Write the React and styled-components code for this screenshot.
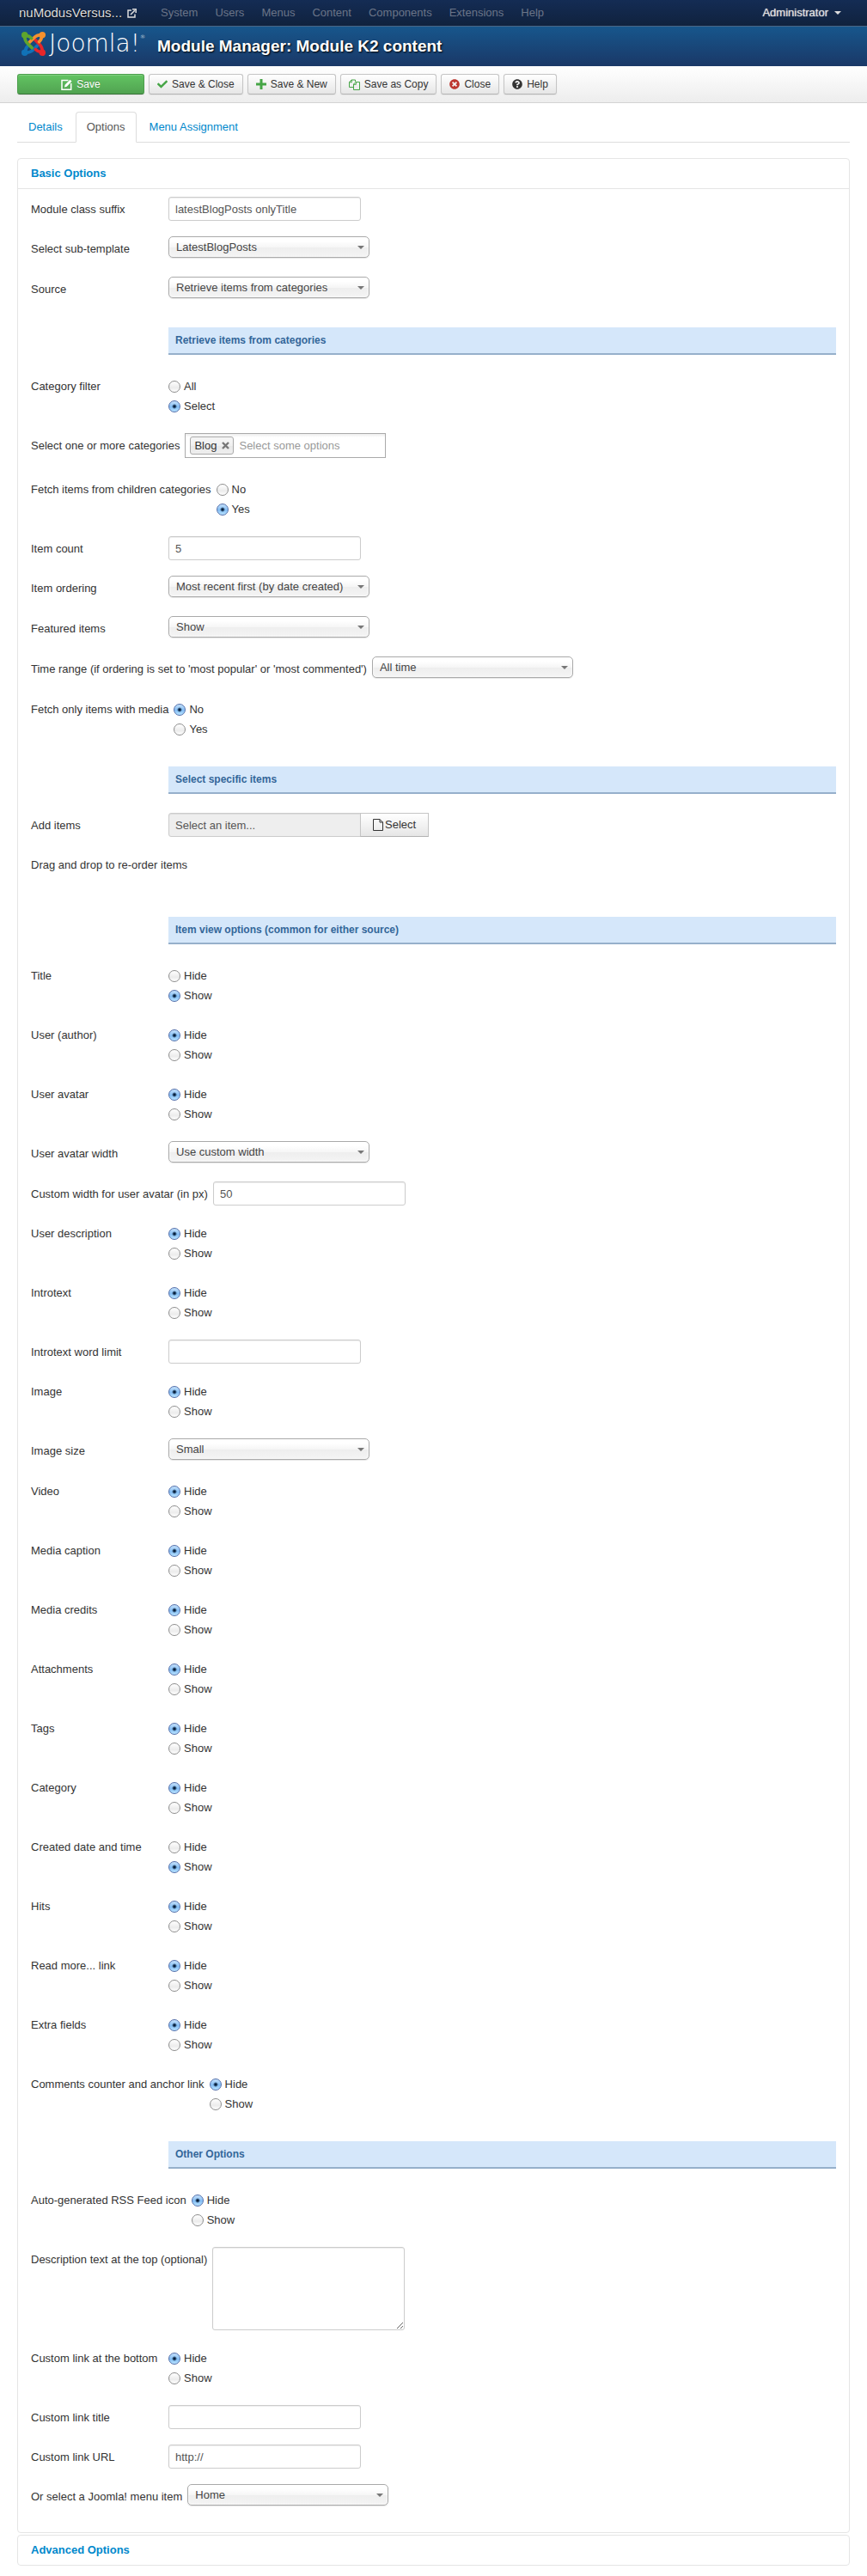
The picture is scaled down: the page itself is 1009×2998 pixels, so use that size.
import { useId } from "react";
import styled, { createGlobalStyle } from "styled-components";
import { FaCheck, FaQuestionCircle, FaTimesCircle } from "react-icons/fa";

const GlobalStyle = createGlobalStyle`
  * {
    box-sizing: border-box;
  }

  body {
    margin: 0;
    background: #fff;
    color: #333;
    font-family: "Liberation Sans", Arial, Helvetica, sans-serif;
    font-size: 13px;
    line-height: 18px;
  }

  input, select, textarea, button {
    margin: 0;
    font-family: inherit;
    font-size: 13px;
    line-height: 18px;
  }

  a {
    color: #08c;
    text-decoration: none;
  }
`;

const NavBar = styled.nav`
  display: flex;
  align-items: center;
  height: 31px;
  padding: 0 30px 0 22px;
  background: linear-gradient(#142c54, #10223e);
  border-bottom: 1px solid #4a6686;
`;

const SiteLink = styled.a`
  display: flex;
  align-items: center;
  gap: 6px;
  margin-right: 18px;
  color: #ddd;
  font-size: 15px;
  text-shadow: 0 1px 1px #000;
`;

const NavMenu = styled.ul`
  display: flex;
  flex: 1;
  margin: 0;
  padding: 0;
  list-style: none;
`;

const NavLink = styled.a`
  padding: 0 10px;
  color: #6b7588;
`;

const UserLink = styled.a`
  display: flex;
  align-items: center;
  gap: 7px;
  color: #ddd;
  text-shadow: 0 0 1px #ddd;
`;

const Caret = styled.span`
  border-top: 4px solid ${props => props.color || "#ddd"};
  border-left: 4px solid transparent;
  border-right: 4px solid transparent;
`;

const Header = styled.header`
  display: flex;
  align-items: center;
  gap: 14px;
  height: 46px;
  padding: 0 25px;
  background: linear-gradient(#17568c, #1a3867);
`;

const Logo = styled.div`
  display: flex;
  align-items: center;
  gap: 4px;
  width: 144px;
  padding-bottom: 6px;
  color: #fff;
`;

const LogoText = styled.span`
  display: flex;
  font-family: "DejaVu Sans", sans-serif;
  font-size: 28px;
  font-weight: 200;
  line-height: 30px;
`;

const Trademark = styled.sup`
  font-size: 6px;
  line-height: 14px;
`;

const PageTitle = styled.h1`
  margin: 0;
  color: #fff;
  font-size: 19px;
  line-height: 36px;
  text-shadow: 1px 1px 2px #000;
`;

const Toolbar = styled.div`
  display: flex;
  flex-wrap: wrap;
  gap: 5px;
  padding: 9px 20px;
  background: linear-gradient(#fff, #ededed);
  border-bottom: 1px solid #d3d3d3;
`;

const ToolButton = styled.button`
  display: flex;
  align-items: center;
  justify-content: center;
  gap: 5px;
  height: 24px;
  min-width: ${props => props.$primary ? "148px" : "0"};
  padding: 0 9px;
  color: ${props => props.$primary ? "#fff" : "#333"};
  background: ${props => props.$primary ? "linear-gradient(#62c462, #51a351)" : "linear-gradient(#fff, #e6e6e6)"};
  border: 1px solid ${props => props.$primary ? "#4b9e4b" : "#c5c5c5"};
  border-bottom-color: ${props => props.$primary ? "#387038" : "#b3b3b3"};
  border-radius: 3px;
  box-shadow: inset 0 1px 0 rgba(255, 255, 255, .2), 0 1px 2px rgba(0, 0, 0, .05);
  font-size: 12px;
  text-shadow: ${props => props.$primary ? "0 -1px 0 rgba(0, 0, 0, .25)" : "none"};
`;

const Content = styled.main`
  padding: 10px 20px;
`;

const Tabs = styled.div`
  display: flex;
  gap: 2px;
  margin-bottom: 18px;
  border-bottom: 1px solid #ddd;
`;

const Tab = styled.a`
  margin-bottom: -1px;
  padding: 8px 12px;
  color: ${props => props.$active ? "#555" : "#08c"};
  background: ${props => props.$active ? "#fff" : "transparent"};
  border: 1px solid ${props => props.$active ? "#ddd" : "transparent"};
  border-bottom-color: ${props => props.$active ? "#fff" : "transparent"};
  border-radius: 4px 4px 0 0;
`;

const Panel = styled.section`
  margin-bottom: 2px;
  border: 1px solid #e5e5e5;
  border-radius: 4px;
`;

const PanelHeading = styled.h2`
  margin: 0;
  padding: 8px 15px;
  font-size: 13px;
  line-height: 18px;
`;

const PanelBody = styled.div`
  padding: 9px 15px;
  border-top: 1px solid #e5e5e5;
`;

const Row = styled.div`
  display: flex;
  align-items: flex-start;
  min-height: ${props => props.$height}px;
`;

const RowLabel = styled.label`
  flex: none;
  min-width: 160px;
  padding: 6px 6px 0 0;
`;

const Band = styled.h3`
  margin: 12px 0 22px 160px;
  padding: 6px 8px;
  color: #369;
  background: #d5e7fa;
  border-bottom: 2px solid #96b0cb;
  font-size: 12px;
  line-height: 18px;
`;

const TextInput = styled.input`
  width: 224px;
  height: 28px;
  padding: 4px 7px;
  color: #555;
  background: ${props => props.readOnly ? "#eee" : "#fff"};
  border: 1px solid #ccc;
  border-radius: ${props => props.readOnly ? "3px 0 0 3px" : "3px"};
  box-shadow: inset 0 1px 1px rgba(0, 0, 0, .075);
`;

const TextArea = styled.textarea`
  width: 224px;
  height: 97px;
  padding: 4px 7px;
  color: #555;
  border: 1px solid #ccc;
  border-radius: 3px;
  box-shadow: inset 0 1px 1px rgba(0, 0, 0, .075);
`;

/* the caret shares the select's grid cell */
const SelectBox = styled.span`
  display: grid;
  align-items: center;
  width: 234px;

  > * {
    grid-area: 1 / 1;
  }

  > span {
    justify-self: end;
    margin-right: 6px;
    pointer-events: none;
  }
`;

const StyledSelect = styled.select`
  appearance: none;
  width: 100%;
  height: 25px;
  padding: 0 22px 0 8px;
  color: #444;
  background: linear-gradient(#fff 20%, #f6f6f6 50%, #eee 52%, #f4f4f4 100%);
  border: 1px solid #aaa;
  border-radius: 5px;
  box-shadow: inset 0 0 3px #fff, 0 1px 1px rgba(0, 0, 0, .1);
`;

const RadioGroup = styled.div`
  display: flex;
  flex-direction: column;
  gap: 5px;
  padding-top: 6px;
`;

const RadioLabel = styled.label`
  display: flex;
  align-items: center;
  gap: 4px;
`;

const RadioInput = styled.input`
  appearance: none;
  width: 14px;
  height: 14px;
  background: linear-gradient(#fff, #ececec 60%, #fff);
  border: 1px solid #8e8e8e;
  border-radius: 50%;

  &:checked {
    background:
      radial-gradient(circle, #07203c 1px, transparent 3px),
      linear-gradient(#c4e1fb, #83bdf4 55%, #b9e4ff);
    border-color: #5570ab;
  }
`;

const ChosenBox = styled.div`
  display: flex;
  align-items: center;
  gap: 6px;
  width: 234px;
  height: 29px;
  padding: 0 5px;
  background: linear-gradient(#eee 1%, #fff 15%);
  border: 1px solid #aaa;
`;

const Chip = styled.span`
  display: flex;
  align-items: center;
  gap: 6px;
  height: 21px;
  padding: 0 4px;
  background: linear-gradient(#f4f4f4 20%, #f0f0f0 50%, #e8e8e8 52%, #eee);
  border: 1px solid #aaa;
  border-radius: 3px;
`;

const ChipClose = styled.button`
  display: flex;
  padding: 0;
  color: #777;
  background: none;
  border: 0;
`;

const ChosenInput = styled.input`
  flex: 1;
  min-width: 0;
  padding: 0;
  background: transparent;
  border: 0;

  &::placeholder {
    color: #999;
  }
`;

const PickButton = styled.button`
  display: flex;
  align-items: center;
  gap: 2px;
  height: 28px;
  margin-left: -1px;
  padding: 4px 14px;
  color: #333;
  background: linear-gradient(#fff, #e6e6e6);
  border: 1px solid #c5c5c5;
  border-bottom-color: #b3b3b3;
`;

const JoomlaMark = () => (
    <svg width="30" height="30" viewBox="0 0 30 30" fill="none" strokeWidth="4" strokeLinecap="round" strokeLinejoin="round">
        <g stroke="#1172b8">
            <circle cx="4" cy="26" r="2" fill="#1172b8" />
            <path d="M4 26 C9 26.500 12 25 15 22 L20 17 M5 25 C4.500 22 5.500 20 8 17.500" />
        </g>
        <g stroke="#e8262a">
            <circle cx="26" cy="26" r="2" fill="#e8262a" />
            <path d="M26 26 C26.500 21 25 18 22 15 L17 10 M25 25 C22 25.500 20 24.500 17.500 22" />
        </g>
        <g stroke="#f7912d">
            <circle cx="26" cy="4" r="2" fill="#f7912d" />
            <path d="M26 4 C21 3.500 18 5 15 8 L10 13 M25 5 C25.500 8 24.500 10 22 12.500" />
        </g>
        <g stroke="#5fa52d">
            <circle cx="4" cy="4" r="2" fill="#5fa52d" />
            <path d="M4 4 C3.500 9 5 12 8 15 L13 20 M5 5 C8 4.500 10 5.500 12.500 8" />
        </g>
    </svg>
);

const ExternalIcon = () => (
    <svg width="11" height="11" viewBox="0 0 11 11" fill="none" stroke="#ddd" strokeWidth="1.500">
        <path d="M5 2H1v8h8V6.500M4 7l5-5" />
        <path d="M6 .8h4.200V5" />
    </svg>
);

const EditIcon = () => (
    <svg width="13" height="13" viewBox="0 0 13 13" fill="none" stroke="#fff" strokeWidth="1.500">
        <path d="M8.500 1.500H1v10.700h10.700V5" />
        <path d="M4 9.500l.6-2.800L10.500.8l2 2L6.700 8.800z" fill="#fff" stroke="none" />
    </svg>
);

const PlusIcon = () => (
    <svg width="12" height="12" viewBox="0 0 12 12" fill="#46a546">
        <path d="M4.500 0h3v4.500H12v3H7.500V12h-3V7.500H0v-3h4.500z" />
    </svg>
);

const CopyIcon = () => (
    <svg width="13" height="13" viewBox="0 0 13 13" fill="none" stroke="#46a546">
        <path d="M5 9.500H.5v-6L3 1h4.500v2M.5 3.800h2.800V1" />
        <path d="M5.500 6L8 3.500h4.500v9h-7zM5.500 6.300h2.800V3.500" />
    </svg>
);

const FileIcon = () => (
    <svg width="12" height="14" viewBox="0 0 12 14" fill="none" stroke="#333">
        <path d="M.5.5h7.500L11.500 4v9.500H.5zM8 .5V4h3.500" />
    </svg>
);

const CrossIcon = () => (
    <svg width="9" height="9" viewBox="0 0 9 9" stroke="currentColor" strokeWidth="2.400">
        <path d="M1 1l7 7M8 1L1 8" />
    </svg>
);

const TextField = ({ label, value }) => {
    const id = useId();
    return (
        <Row $height={46}>
            <RowLabel htmlFor={id}>{label}</RowLabel>
            <TextInput id={id} type="text" defaultValue={value} />
        </Row>
    )
}

const SelectField = ({ label, value }) => {
    const id = useId();
    return (
        <Row $height={47}>
            <RowLabel htmlFor={id}>{label}</RowLabel>
            <SelectBox>
                <StyledSelect id={id} defaultValue={value}>
                    <option>{value}</option>
                </StyledSelect>
                <Caret color="#777" />
            </SelectBox>
        </Row>
    )
}

const RadioField = ({ label, options = ["Hide", "Show"], value }) => {
    const id = useId();
    return (
        <Row $height={69}>
            <RowLabel as="span" id={id}>{label}</RowLabel>
            <RadioGroup role="radiogroup" aria-labelledby={id}>
                {options.map(option => (
                    <RadioLabel key={option}>
                        <RadioInput type="radio" name={id} defaultChecked={option === value} />
                        {option}
                    </RadioLabel>
                ))}
            </RadioGroup>
        </Row>
    )
}

const viewOptions = [
    ["Video", "Hide"],
    ["Media caption", "Hide"],
    ["Media credits", "Hide"],
    ["Attachments", "Hide"],
    ["Tags", "Hide"],
    ["Category", "Hide"],
    ["Created date and time", "Show"],
    ["Hits", "Hide"],
    ["Read more... link", "Hide"],
    ["Extra fields", "Hide"],
    ["Comments counter and anchor link", "Hide"],
];

const menus = ["System", "Users", "Menus", "Content", "Components", "Extensions", "Help"];

const BasicOptions = () => (
    <PanelBody>
        <TextField label="Module class suffix" value="latestBlogPosts onlyTitle" />
        <SelectField label="Select sub-template" value="LatestBlogPosts" />
        <SelectField label="Source" value="Retrieve items from categories" />

        <Band>Retrieve items from categories</Band>
        <RadioField label="Category filter" options={["All", "Select"]} value="Select" />
        <Row $height={51}>
            <RowLabel htmlFor="categories">Select one or more categories</RowLabel>
            <ChosenBox>
                <Chip>Blog <ChipClose type="button" aria-label="Remove Blog"><CrossIcon /></ChipClose></Chip>
                <ChosenInput id="categories" type="text" placeholder="Select some options" />
            </ChosenBox>
        </Row>
        <RadioField label="Fetch items from children categories" options={["No", "Yes"]} value="Yes" />
        <TextField label="Item count" value="5" />
        <SelectField label="Item ordering" value="Most recent first (by date created)" />
        <SelectField label="Featured items" value="Show" />
        <SelectField label="Time range (if ordering is set to 'most popular' or 'most commented')" value="All time" />
        <RadioField label="Fetch only items with media" options={["No", "Yes"]} value="No" />

        <Band>Select specific items</Band>
        <Row $height={46}>
            <RowLabel htmlFor="addItems">Add items</RowLabel>
            <TextInput id="addItems" type="text" value="Select an item..." readOnly />
            <PickButton type="button"><FileIcon />Select</PickButton>
        </Row>
        <Row $height={63}>
            <RowLabel as="span">Drag and drop to re-order items</RowLabel>
        </Row>

        <Band>Item view options (common for either source)</Band>
        <RadioField label="Title" value="Show" />
        <RadioField label="User (author)" value="Hide" />
        <RadioField label="User avatar" value="Hide" />
        <SelectField label="User avatar width" value="Use custom width" />
        <TextField label="Custom width for user avatar (in px)" value="50" />
        <RadioField label="User description" value="Hide" />
        <RadioField label="Introtext" value="Hide" />
        <TextField label="Introtext word limit" value="" />
        <RadioField label="Image" value="Hide" />
        <SelectField label="Image size" value="Small" />
        {viewOptions.map(([label, value]) => (
            <RadioField key={label} label={label} value={value} />
        ))}

        <Band>Other Options</Band>
        <RadioField label="Auto-generated RSS Feed icon" value="Hide" />
        <Row $height={115}>
            <RowLabel htmlFor="description">Description text at the top (optional)</RowLabel>
            <TextArea id="description" />
        </Row>
        <RadioField label="Custom link at the bottom" value="Hide" />
        <TextField label="Custom link title" value="" />
        <TextField label="Custom link URL" value="http://" />
        <SelectField label="Or select a Joomla! menu item" value="Home" />
    </PanelBody>
);

export default function App() {
    return (
        <>
            <GlobalStyle />
            <NavBar>
                <SiteLink href="#">nuModusVersus... <ExternalIcon /></SiteLink>
                <NavMenu>
                    {menus.map(menu => <li key={menu}><NavLink href="#">{menu}</NavLink></li>)}
                </NavMenu>
                <UserLink href="#">Administrator <Caret /></UserLink>
            </NavBar>
            <Header>
                <Logo>
                    <JoomlaMark />
                    <LogoText>Joomla!<Trademark>®</Trademark></LogoText>
                </Logo>
                <PageTitle>Module Manager: Module K2 content</PageTitle>
            </Header>
            <Toolbar>
                <ToolButton type="button" $primary><EditIcon />Save</ToolButton>
                <ToolButton type="button"><FaCheck size={12} color="#46a546" />Save &amp; Close</ToolButton>
                <ToolButton type="button"><PlusIcon />Save &amp; New</ToolButton>
                <ToolButton type="button"><CopyIcon />Save as Copy</ToolButton>
                <ToolButton type="button"><FaTimesCircle size={12} color="#bd362f" />Close</ToolButton>
                <ToolButton type="button"><FaQuestionCircle size={12} color="#333" />Help</ToolButton>
            </Toolbar>
            <Content>
                <Tabs>
                    <Tab href="#">Details</Tab>
                    <Tab href="#" $active>Options</Tab>
                    <Tab href="#">Menu Assignment</Tab>
                </Tabs>
                <Panel>
                    <PanelHeading><a href="#">Basic Options</a></PanelHeading>
                    <BasicOptions />
                </Panel>
                <Panel>
                    <PanelHeading><a href="#">Advanced Options</a></PanelHeading>
                </Panel>
            </Content>
        </>
    )
}
